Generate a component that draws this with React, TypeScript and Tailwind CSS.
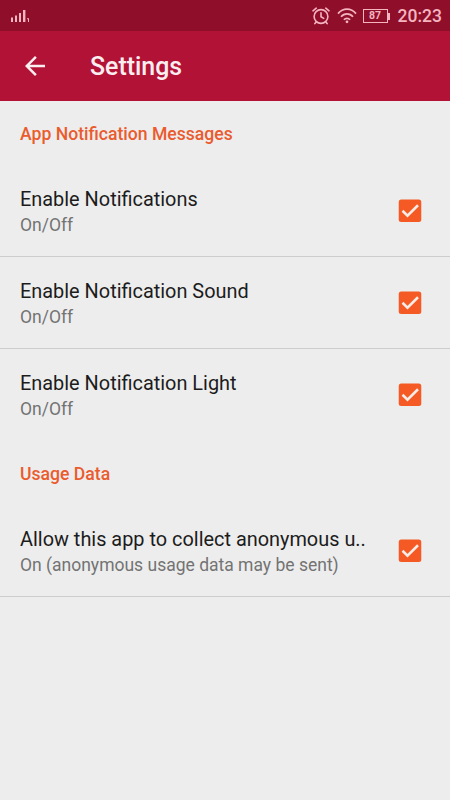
interface Preference {
    title: string
    summary: string
    divider: boolean
}

interface Category {
    name: string
    items: Preference[]
}

const CATEGORIES: Category[] = [
    {
        name: 'App Notification Messages',
        items: [
            { title: 'Enable Notifications', summary: 'On/Off', divider: true },
            { title: 'Enable Notification Sound', summary: 'On/Off', divider: true },
            { title: 'Enable Notification Light', summary: 'On/Off', divider: false },
        ],
    },
    {
        name: 'Usage Data',
        items: [
            { title: 'Allow this app to collect anonymous u..', summary: 'On (anonymous usage data may be sent)', divider: true },
        ],
    },
]

function SignalIcon() {
    return (
        <svg width="20" height="14" viewBox="0 0 20 14" fill="#f4b4c0">
            <rect x="1" y="8.5" width="2" height="4.5" />
            <rect x="5" y="6.5" width="2" height="6.5" />
            <rect x="9" y="4" width="2" height="9" />
            <rect x="13" y="1" width="2.4" height="12" />
            <path d="M17 9.2h2V13h-1v-2.8h-1z" />
        </svg>
    )
}

function AlarmIcon() {
    return (
        <svg width="18" height="18" viewBox="0 0 18 18" fill="none" stroke="#f4b4c0" strokeWidth="1.6" strokeLinecap="round">
            <circle cx="9" cy="9.5" r="6.9" />
            <path d="M9 5.7v4l2.7 1.7M1 3.8 4.2 1.2M17 3.8l-3.2-2.6M4.2 15l-1.3 1.6M13.8 15l1.3 1.6" />
        </svg>
    )
}

function WifiIcon() {
    return (
        <svg width="20" height="16" viewBox="0 0 20 16" fill="none" stroke="#f4b4c0" strokeWidth="1.7">
            <path d="M1 5.6C6-.3 14-.3 19 5.6M4 8.8c3.3-4 8.7-4 12 0M6.9 11.8c1.7-2 4.5-2 6.2 0" />
            <circle cx="10" cy="13.8" r="1.4" fill="#f4b4c0" stroke="none" />
        </svg>
    )
}

function Battery({ level }: { level: number }) {
    return (
        <div className="flex items-center">
            <div className="flex h-[14px] w-[25px] items-center justify-center border border-[#f4b4c0] text-[10.5px] leading-none font-bold">
                {level}
            </div>
            <div className="h-[7px] w-[2px] bg-[#f4b4c0]" />
        </div>
    )
}

function Checkbox() {
    return (
        <svg width="30" height="30" viewBox="0 0 24 24" className="shrink-0">
            <rect x="3" y="2.8" width="18" height="18" rx="2" fill="#f55a25" />
            <path d="m6 11.8 4 4 8.4-8.4" fill="none" stroke="#f8ece6" strokeWidth="2" />
        </svg>
    )
}

function PreferenceRow({ title, summary, divider }: Preference) {
    return (
        <div className={`flex h-[92px] items-center justify-between border-b pr-[25px] pl-5 ${divider ? 'border-[#cdcdcd]' : 'border-transparent'}`}>
            <div className="pt-[3px] whitespace-nowrap">
                <p className="text-[19.9px] leading-[26px] text-[#1c1c1c]">{title}</p>
                <p className="text-[17.5px] leading-[25px] text-[#737373]">{summary}</p>
            </div>
            <Checkbox />
        </div>
    )
}

export default function App() {
    return (
        <div className="h-[800px] w-[450px] overflow-hidden bg-[#ededed] font-['Roboto',sans-serif]">
            <div className="flex h-[31px] items-center justify-between bg-[#8f0f2b] pt-px pr-2 pl-[10px] text-[#f4b4c0]">
                <SignalIcon />
                <div className="flex items-center">
                    <AlarmIcon />
                    <div className="ml-[7px]"><WifiIcon /></div>
                    <div className="ml-[6px]"><Battery level={87} /></div>
                    <span className="ml-2 pt-[2px] text-[17.5px] leading-none font-medium">20:23</span>
                </div>
            </div>

            <div className="flex h-[70px] items-center bg-[#b31237] pl-5">
                <svg width="30" height="30" viewBox="0 0 24 24" fill="#fbeef0">
                    <path d="M20 11H7.83l5.59-5.59L12 4l-8 8 8 8 1.41-1.41L7.83 13H20v-2z" />
                </svg>
                <h1 className="ml-10 pt-[3px] text-[24.9px] leading-none font-medium text-[#fbeef0]">Settings</h1>
            </div>

            {CATEGORIES.map(c => (
                <section key={c.name}>
                    <h2 className="flex h-16 items-center px-5 pt-[3px] text-[17.6px] font-medium text-[#ea5b2d]">{c.name}</h2>
                    {c.items.map(p => <PreferenceRow key={p.title} {...p} />)}
                </section>
            ))}
        </div>
    )
}
